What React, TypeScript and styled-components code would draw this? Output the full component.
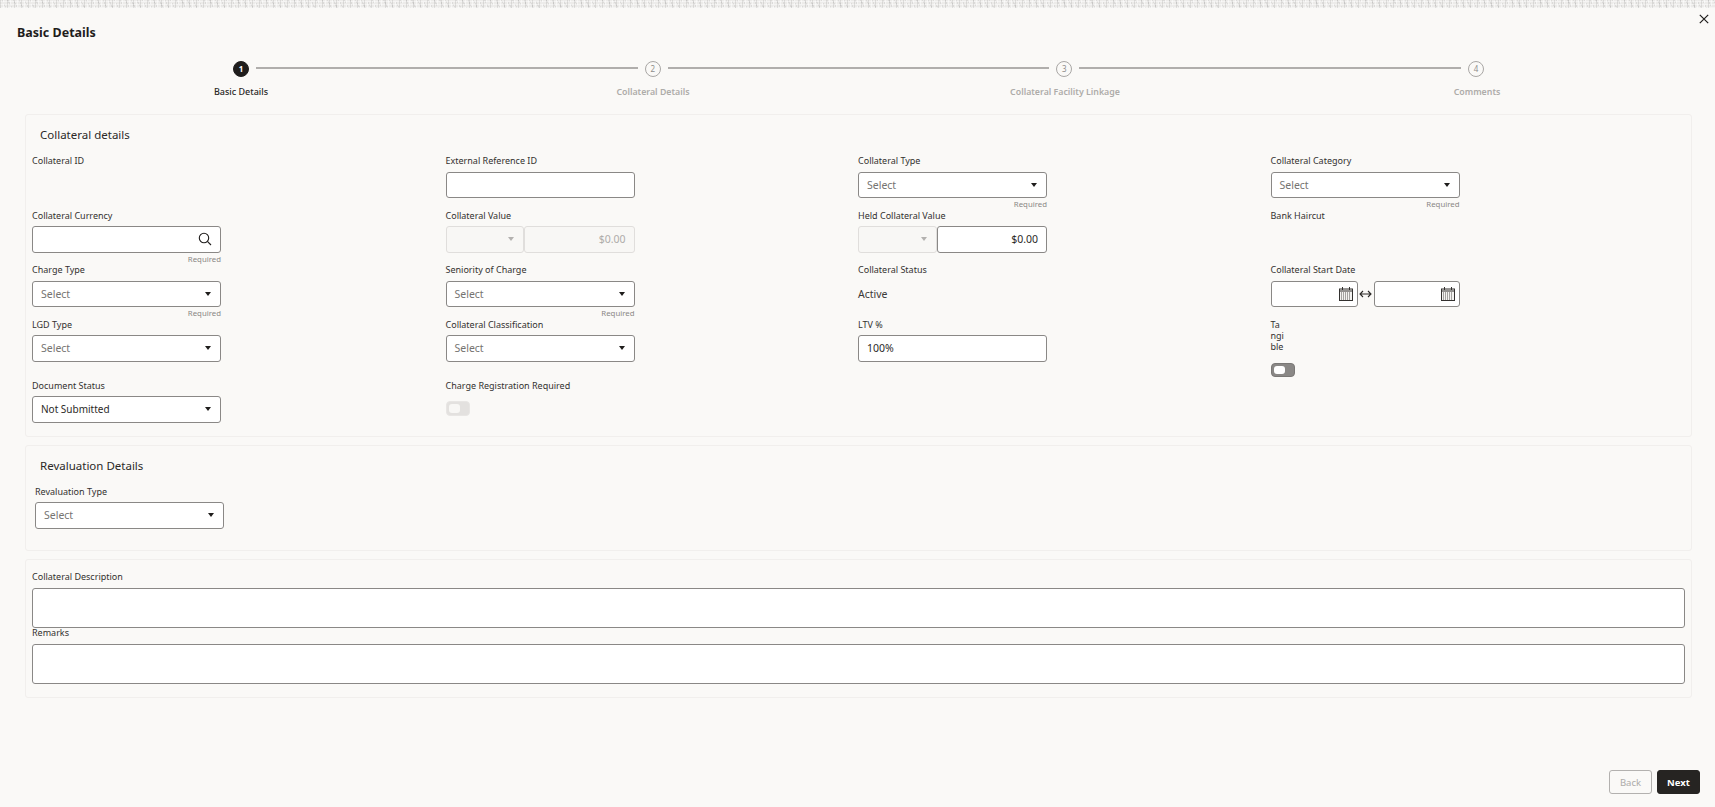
import { FC, Fragment, ReactNode } from "react"
import styled, { createGlobalStyle } from "styled-components"

const GlobalStyle = createGlobalStyle`
  html, body {
    margin: 0;
    padding: 0;
    background: #faf9f7;
    color: #2b2927;
    font-family: "Noto Sans", "Open Sans", sans-serif;
  }
  * {
    box-sizing: border-box;
  }
`

const Page = styled.div`
  position: relative;
  display: flex;
  flex-direction: column;
  height: 807px;
  overflow: hidden;
  background: #faf9f7;
`
const TopBand = styled.div`
  flex: none;
  height: 8px;
  background-color: #ecebe9;
  background-image:
    repeating-linear-gradient(90deg, rgba(0, 0, 0, 0.09) 0 1px, transparent 1px 3px, rgba(255, 255, 255, 0.5) 3px 4px, transparent 4px 7px),
    repeating-linear-gradient(0deg, rgba(255, 255, 255, 0.45) 0 1px, transparent 1px 3px),
    repeating-linear-gradient(63deg, rgba(0, 0, 0, 0.07) 0 1px, transparent 1px 5px);
`
const CloseButton = styled.button`
  position: absolute;
  top: 12px;
  right: 4px;
  width: 14px;
  height: 14px;
  padding: 2px;
  border: 0;
  background: none;
  color: #1f1d1c;
  svg {
    display: block;
    width: 10px;
    height: 10px;
  }
`
const Title = styled.h1`
  margin: 16px 0 0 17px;
  font-size: 12.5px;
  line-height: 17px;
  font-weight: 700;
  color: #1f1d1c;
`
const Stepper = styled.div`
  margin: 19.5px 0 0;
`
const StepTrack = styled.div`
  display: flex;
  align-items: center;
  height: 16px;
  margin: 0 231px 0 233px;
`
const StepCircle = styled.span<{ $active?: boolean }>`
  flex: none;
  display: flex;
  align-items: center;
  justify-content: center;
  width: 16px;
  height: 16px;
  border-radius: 50%;
  border: 1px solid ${p => (p.$active ? "#1f1d1c" : "#a9a7a5")};
  background: ${p => (p.$active ? "#1f1d1c" : "transparent")};
  color: ${p => (p.$active ? "#fff" : "#8f8d8b")};
  font-size: 8px;
  font-weight: ${p => (p.$active ? 700 : 400)};
`
const StepLine = styled.span`
  flex: 1;
  height: 2px;
  margin: 0 7px 2px;
  background: #b0aeac;
`
const StepLabels = styled.div`
  display: grid;
  grid-template-columns: repeat(4, 412px);
  margin: 9.5px 0 0 35px;
`
const StepLabel = styled.span<{ $active?: boolean }>`
  text-align: center;
  font-size: ${p => (p.$active ? "9px" : "8.8px")};
  line-height: 12px;
  font-weight: ${p => (p.$active ? 500 : 600)};
  color: ${p => (p.$active ? "#2b2927" : "#aeaca9")};
`
const Sections = styled.div`
  display: flex;
  flex-direction: column;
  gap: 8px;
  margin: 16px 23px 0 25px;
`
const Section = styled.section<{ $pad?: number; $bottom?: number }>`
  border: 1px solid #f1efed;
  border-radius: 3px;
  padding: 0 0 ${p => p.$bottom ?? 13}px ${p => p.$pad ?? 6}px;
`
const SectionTitle = styled.h2<{ $indent?: number }>`
  margin: 12px 0 12px ${p => p.$indent ?? 8}px;
  font-size: 11.5px;
  line-height: 16px;
  font-weight: 400;
  color: #2b2927;
`
const FormGrid = styled.div`
  display: grid;
  grid-template-columns: 413.5px repeat(3, 412.5px);
`
const Field = styled.div`
  display: flex;
  flex-direction: column;
  align-items: flex-start;
`
const Label = styled.label<{ $narrow?: boolean }>`
  display: block;
  width: ${p => (p.$narrow ? "14px" : "auto")};
  word-break: break-all;
  font-size: 9px;
  line-height: 11px;
  margin-bottom: 5.5px;
  color: #33312f;
`
const Control = styled.div<{ $disabled?: boolean; $width?: number }>`
  display: flex;
  align-items: center;
  justify-content: space-between;
  width: ${p => p.$width ?? 189}px;
  height: 26.5px;
  padding: 0 8px;
  border: 1px solid ${p => (p.$disabled ? "#e0dedc" : "#8a8886")};
  border-radius: 3px;
  background: ${p => (p.$disabled ? "#f8f7f5" : "#fff")};
  font-size: 10.5px;
  color: #2b2927;
`
const Placeholder = styled.span<{ $muted?: boolean }>`
  color: ${p => (p.$muted ? "#aeaca9" : "#757371")};
`
const SelectedText = styled.span`
  font-size: 10px;
`
const Caret = styled.span<{ $disabled?: boolean }>`
  flex: none;
  width: 0;
  height: 0;
  margin-right: 1px;
  border-left: 3.7px solid transparent;
  border-right: 3.7px solid transparent;
  border-top: 4.5px solid ${p => (p.$disabled ? "#b3b1af" : "#1f1d1c")};
`
const Helper = styled.div`
  width: 189px;
  height: 11.5px;
  text-align: right;
  font-size: 7.8px;
  line-height: 12px;
  color: #8a8886;
`
const Group = styled.div`
  display: flex;
  align-items: center;
`
const Amount = styled(Control)`
  justify-content: flex-end;
`
const DateControl = styled(Control)`
  padding-right: 4px;
`
const Value = styled.div`
  height: 27px;
  font-size: 10.5px;
  line-height: 27px;
  color: #3c3a38;
`
const DateSep = styled.span`
  display: flex;
  justify-content: center;
  width: 16px;
  color: #2b2927;
  svg {
    display: block;
    width: 13px;
    height: 8px;
  }
`
const Switch = styled.span<{ $disabled?: boolean }>`
  display: block;
  width: 24px;
  height: 14.5px;
  padding: 2px;
  margin: ${p => (p.$disabled ? "5px 0 0" : "5.5px 0 2.5px")};
  border-radius: 4px;
  border: 1px solid ${p => (p.$disabled ? "#e8e6e4" : "#7a7876")};
  background: ${p => (p.$disabled ? "#e3e1df" : "#8a8886")};
  &::before {
    content: "";
    display: block;
    width: 11px;
    height: 100%;
    border-radius: 3px;
    background: ${p => (p.$disabled ? "#f8f7f5" : "#fff")};
  }
`
const TextBlock = styled.div`
  width: 1653px;
  height: 39.5px;
  border: 1px solid #8a8886;
  border-radius: 3px;
  background: #fff;
`
const Stack = styled.div`
  display: flex;
  flex-direction: column;
  padding-top: 11.5px;
  ${Label} {
    margin-bottom: 6px;
  }
  ${Field} + ${Field} {
    margin-top: -0.5px;
  }
`
const Footer = styled.footer`
  display: flex;
  justify-content: flex-end;
  gap: 5px;
  margin-top: auto;
  padding: 0 15px 13px 0;
`
const FootButton = styled.button<{ $primary?: boolean }>`
  width: 43px;
  height: 24px;
  padding: 0;
  border-radius: 3px;
  border: 1px solid ${p => (p.$primary ? "#262422" : "#b3b1af")};
  background: ${p => (p.$primary ? "#262422" : "transparent")};
  color: ${p => (p.$primary ? "#fff" : "#adaba9")};
  font-family: inherit;
  font-size: 9.5px;
  font-weight: ${p => (p.$primary ? 700 : 400)};
`

const SearchIcon = () => (
  <svg width="14" height="14" viewBox="0 0 14 14" fill="none" stroke="#1f1d1c" strokeWidth="1.1">
    <circle cx="6" cy="6" r="4.7" />
    <path d="M9.4 9.4 13 13" />
  </svg>
)

const CalendarIcon = () => (
  <svg width="14" height="14" viewBox="0 0 14 14" fill="none">
    <rect x="0.5" y="2" width="13" height="11.5" fill="#f4f3f1" stroke="#33312f" />
    <path d="M3.5 0v3M10.5 0v3" stroke="#33312f" />
    <path d="M1 4h12" stroke="#33312f" />
    <path d="M2 6h10M2 8h10M2 10h10M2 12h10" stroke="#55534f" strokeDasharray="1 1" />
  </svg>
)

const Select: FC<{ text?: string }> = ({ text }) => (
  <Control>
    {text ? <SelectedText>{text}</SelectedText> : <Placeholder>Select</Placeholder>}
    <Caret />
  </Control>
)

const FormField: FC<{ label: string; required?: boolean; narrow?: boolean; children?: ReactNode }> = ({
  label,
  required,
  narrow,
  children,
}) => (
  <Field>
    <Label $narrow={narrow}>{label}</Label>
    {children}
    {required && <Helper>Required</Helper>}
  </Field>
)

const steps = ["Basic Details", "Collateral Details", "Collateral Facility Linkage", "Comments"]

const App: FC = () => {
  return (
    <Page>
      <GlobalStyle />
      <TopBand />
      <CloseButton aria-label="Close">
        <svg viewBox="0 0 10 10" fill="none" stroke="currentColor" strokeWidth="1.2">
          <path d="M.8.8l8.4 8.4M9.2.8.8 9.2" />
        </svg>
      </CloseButton>
      <Title>Basic Details</Title>
      <Stepper>
        <StepTrack>
          {steps.map((step, i) => (
            <Fragment key={step}>
              <StepCircle $active={i === 0}>{i + 1}</StepCircle>
              {i < steps.length - 1 && <StepLine />}
            </Fragment>
          ))}
        </StepTrack>
        <StepLabels>
          {steps.map((step, i) => (
            <StepLabel key={step} $active={i === 0}>{step}</StepLabel>
          ))}
        </StepLabels>
      </Stepper>
      <Sections>
        <Section>
          <SectionTitle>Collateral details</SectionTitle>
          <FormGrid>
            <FormField label="Collateral ID" />
            <FormField label="External Reference ID">
              <Control />
            </FormField>
            <FormField label="Collateral Type" required>
              <Select />
            </FormField>
            <FormField label="Collateral Category" required>
              <Select />
            </FormField>

            <FormField label="Collateral Currency" required>
              <Control>
                <span />
                <SearchIcon />
              </Control>
            </FormField>
            <FormField label="Collateral Value">
              <Group>
                <Control $disabled $width={78}>
                  <span />
                  <Caret $disabled />
                </Control>
                <Amount $disabled $width={111}>
                  <Placeholder $muted>$0.00</Placeholder>
                </Amount>
              </Group>
            </FormField>
            <FormField label="Held Collateral Value">
              <Group>
                <Control $disabled $width={79}>
                  <span />
                  <Caret $disabled />
                </Control>
                <Amount $width={110}>$0.00</Amount>
              </Group>
            </FormField>
            <FormField label="Bank Haircut" />

            <FormField label="Charge Type" required>
              <Select />
            </FormField>
            <FormField label="Seniority of Charge" required>
              <Select />
            </FormField>
            <FormField label="Collateral Status">
              <Value>Active</Value>
            </FormField>
            <FormField label="Collateral Start Date">
              <Group>
                <DateControl $width={87}>
                  <span />
                  <CalendarIcon />
                </DateControl>
                <DateSep>
                  <svg viewBox="0 0 13 8" fill="none" stroke="currentColor" strokeWidth="1.1">
                    <path d="M1 4h11M4 1 1 4l3 3M9 1l3 3-3 3" />
                  </svg>
                </DateSep>
                <DateControl $width={86}>
                  <span />
                  <CalendarIcon />
                </DateControl>
              </Group>
            </FormField>

            <FormField label="LGD Type">
              <Select />
            </FormField>
            <FormField label="Collateral Classification">
              <Select />
            </FormField>
            <FormField label="LTV %">
              <Control>100%</Control>
            </FormField>
            <FormField label="Tangible" narrow>
              <Switch />
            </FormField>

            <FormField label="Document Status">
              <Select text="Not Submitted" />
            </FormField>
            <FormField label="Charge Registration Required">
              <Switch $disabled />
            </FormField>
          </FormGrid>
        </Section>

        <Section $pad={9} $bottom={21}>
          <SectionTitle $indent={5}>Revaluation Details</SectionTitle>
          <FormField label="Revaluation Type">
            <Select />
          </FormField>
        </Section>

        <Section>
          <Stack>
            <FormField label="Collateral Description">
              <TextBlock />
            </FormField>
            <FormField label="Remarks">
              <TextBlock />
            </FormField>
          </Stack>
        </Section>
      </Sections>
      <Footer>
        <FootButton disabled>Back</FootButton>
        <FootButton $primary>Next</FootButton>
      </Footer>
    </Page>
  )
}

export default App
